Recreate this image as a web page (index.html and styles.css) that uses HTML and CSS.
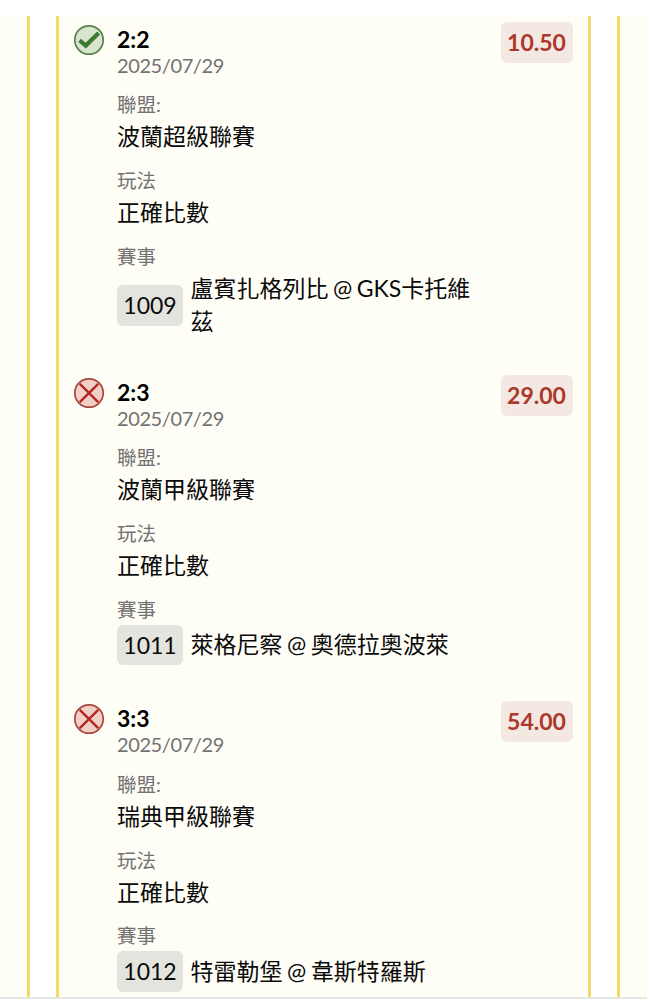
FILE: index.html
```
<!DOCTYPE html>
<html lang="zh-Hant">
<head>
    <meta charset="UTF-8">
    <meta name="viewport" content="width=device-width, initial-scale=1.0">
    <title>投注紀錄</title>
    <link rel="stylesheet" href="styles.css">
</head>
<body>
    <div class="page">
        <div class="outer-card outer-left"></div>
        <div class="bet-list">
            <div class="bet">
                <svg class="status win" viewBox="0 0 32 32">
                    <circle cx="16" cy="16" r="14.2"/>
                    <path d="M6.6 16.4 L12.8 21.6 L25.6 9"/>
                </svg>
                <div class="bet-info">
                    <div class="score">2:2</div>
                    <div class="date">2025/07/29</div>
                    <div class="label">聯盟:</div>
                    <div class="value">波蘭超級聯賽</div>
                    <div class="label">玩法</div>
                    <div class="value">正確比數</div>
                    <div class="label">賽事</div>
                    <div class="match">
                        <span class="match-id">1009</span>
                        <span class="teams">盧賓扎格列比 @ GKS卡托維茲</span>
                    </div>
                </div>
                <div class="odds">10.50</div>
            </div>
            <div class="bet">
                <svg class="status lose" viewBox="0 0 32 32">
                    <circle cx="16" cy="16" r="14.2"/>
                    <path d="M6.8 6.8 L25.2 25.2 M25.2 6.8 L6.8 25.2"/>
                </svg>
                <div class="bet-info">
                    <div class="score">2:3</div>
                    <div class="date">2025/07/29</div>
                    <div class="label">聯盟:</div>
                    <div class="value">波蘭甲級聯賽</div>
                    <div class="label">玩法</div>
                    <div class="value">正確比數</div>
                    <div class="label">賽事</div>
                    <div class="match">
                        <span class="match-id">1011</span>
                        <span class="teams">萊格尼察 @ 奧德拉奧波萊</span>
                    </div>
                </div>
                <div class="odds">29.00</div>
            </div>
            <div class="bet">
                <svg class="status lose" viewBox="0 0 32 32">
                    <circle cx="16" cy="16" r="14.2"/>
                    <path d="M6.8 6.8 L25.2 25.2 M25.2 6.8 L6.8 25.2"/>
                </svg>
                <div class="bet-info">
                    <div class="score">3:3</div>
                    <div class="date">2025/07/29</div>
                    <div class="label">聯盟:</div>
                    <div class="value">瑞典甲級聯賽</div>
                    <div class="label">玩法</div>
                    <div class="value">正確比數</div>
                    <div class="label">賽事</div>
                    <div class="match">
                        <span class="match-id">1012</span>
                        <span class="teams">特雷勒堡 @ 韋斯特羅斯</span>
                    </div>
                </div>
                <div class="odds">54.00</div>
            </div>
        </div>
        <div class="outer-card outer-right"></div>
    </div>
</body>
</html>
```

FILE: styles.css
```
* {
    box-sizing: border-box;
}
body {
    margin: 0;
    padding-top: 16px;
    height: 1000px;
    overflow: hidden;
    background-color: #fff;
    color: #0a0a0a;
    font-family: Lato, "Noto Sans CJK TC", sans-serif;
}
.page {
    display: flex;
    height: 983px;
    border-bottom: 2px solid #e6e7e5;
}
.outer-card {
    background-color: #fffef6;
}
.outer-left {
    width: 29.5px;
    border-right: 3px solid #f3d965;
}
.outer-right {
    flex: 1;
    border-left: 3px solid #f3d965;
}
.bet-list {
    width: 535px;
    margin: 0 26px;
    padding: 6px 15px 0 14px;
    background-color: #fffef6;
    border-left: 3px solid #f3d965;
    border-right: 3px solid #f0dc68;
    overflow: hidden;
}
.bet {
    display: flex;
    align-items: flex-start;
    margin-bottom: 36px;
}
.status {
    flex: none;
    width: 32px;
    height: 32px;
    margin: 2px 12.5px 0 0;
}
.status circle {
    stroke-width: 1.7;
}
.status path {
    fill: none;
}
.win circle {
    fill: #d9e4cf;
    stroke: #57804c;
}
.win path {
    stroke: #3d7a2f;
    stroke-width: 4.2;
}
.lose circle {
    fill: #f1cfc6;
    stroke: #a8463e;
}
.lose path {
    stroke: #b32622;
    stroke-width: 2.4;
}
.bet-info {
    width: 360px;
    margin-right: auto;
    padding-top: 4px;
}
.score {
    font-size: 23px;
    font-weight: bold;
    line-height: 26px;
    color: #000;
}
.date {
    font-size: 20px;
    line-height: 26px;
    letter-spacing: -0.4px;
    color: #727272;
}
.label {
    margin-top: 12.2px;
    font-size: 19.5px;
    line-height: 30px;
    color: #727272;
}
.value {
    font-size: 23px;
    line-height: 33.7px;
}
.match {
    display: flex;
    align-items: center;
    gap: 7.5px;
}
.match-id {
    flex: none;
    width: 66px;
    border-radius: 6px;
    background-color: #e4e4de;
    font-size: 23px;
    line-height: 40.5px;
    text-align: center;
}
.teams {
    font-size: 23px;
    line-height: 33.5px;
    word-spacing: -1.4px;
}
.odds {
    flex: none;
    width: 72px;
    border-radius: 6px;
    background-color: #f4e8e2;
    color: #ac382d;
    font-size: 23px;
    font-weight: bold;
    line-height: 41px;
    text-align: center;
}
```
